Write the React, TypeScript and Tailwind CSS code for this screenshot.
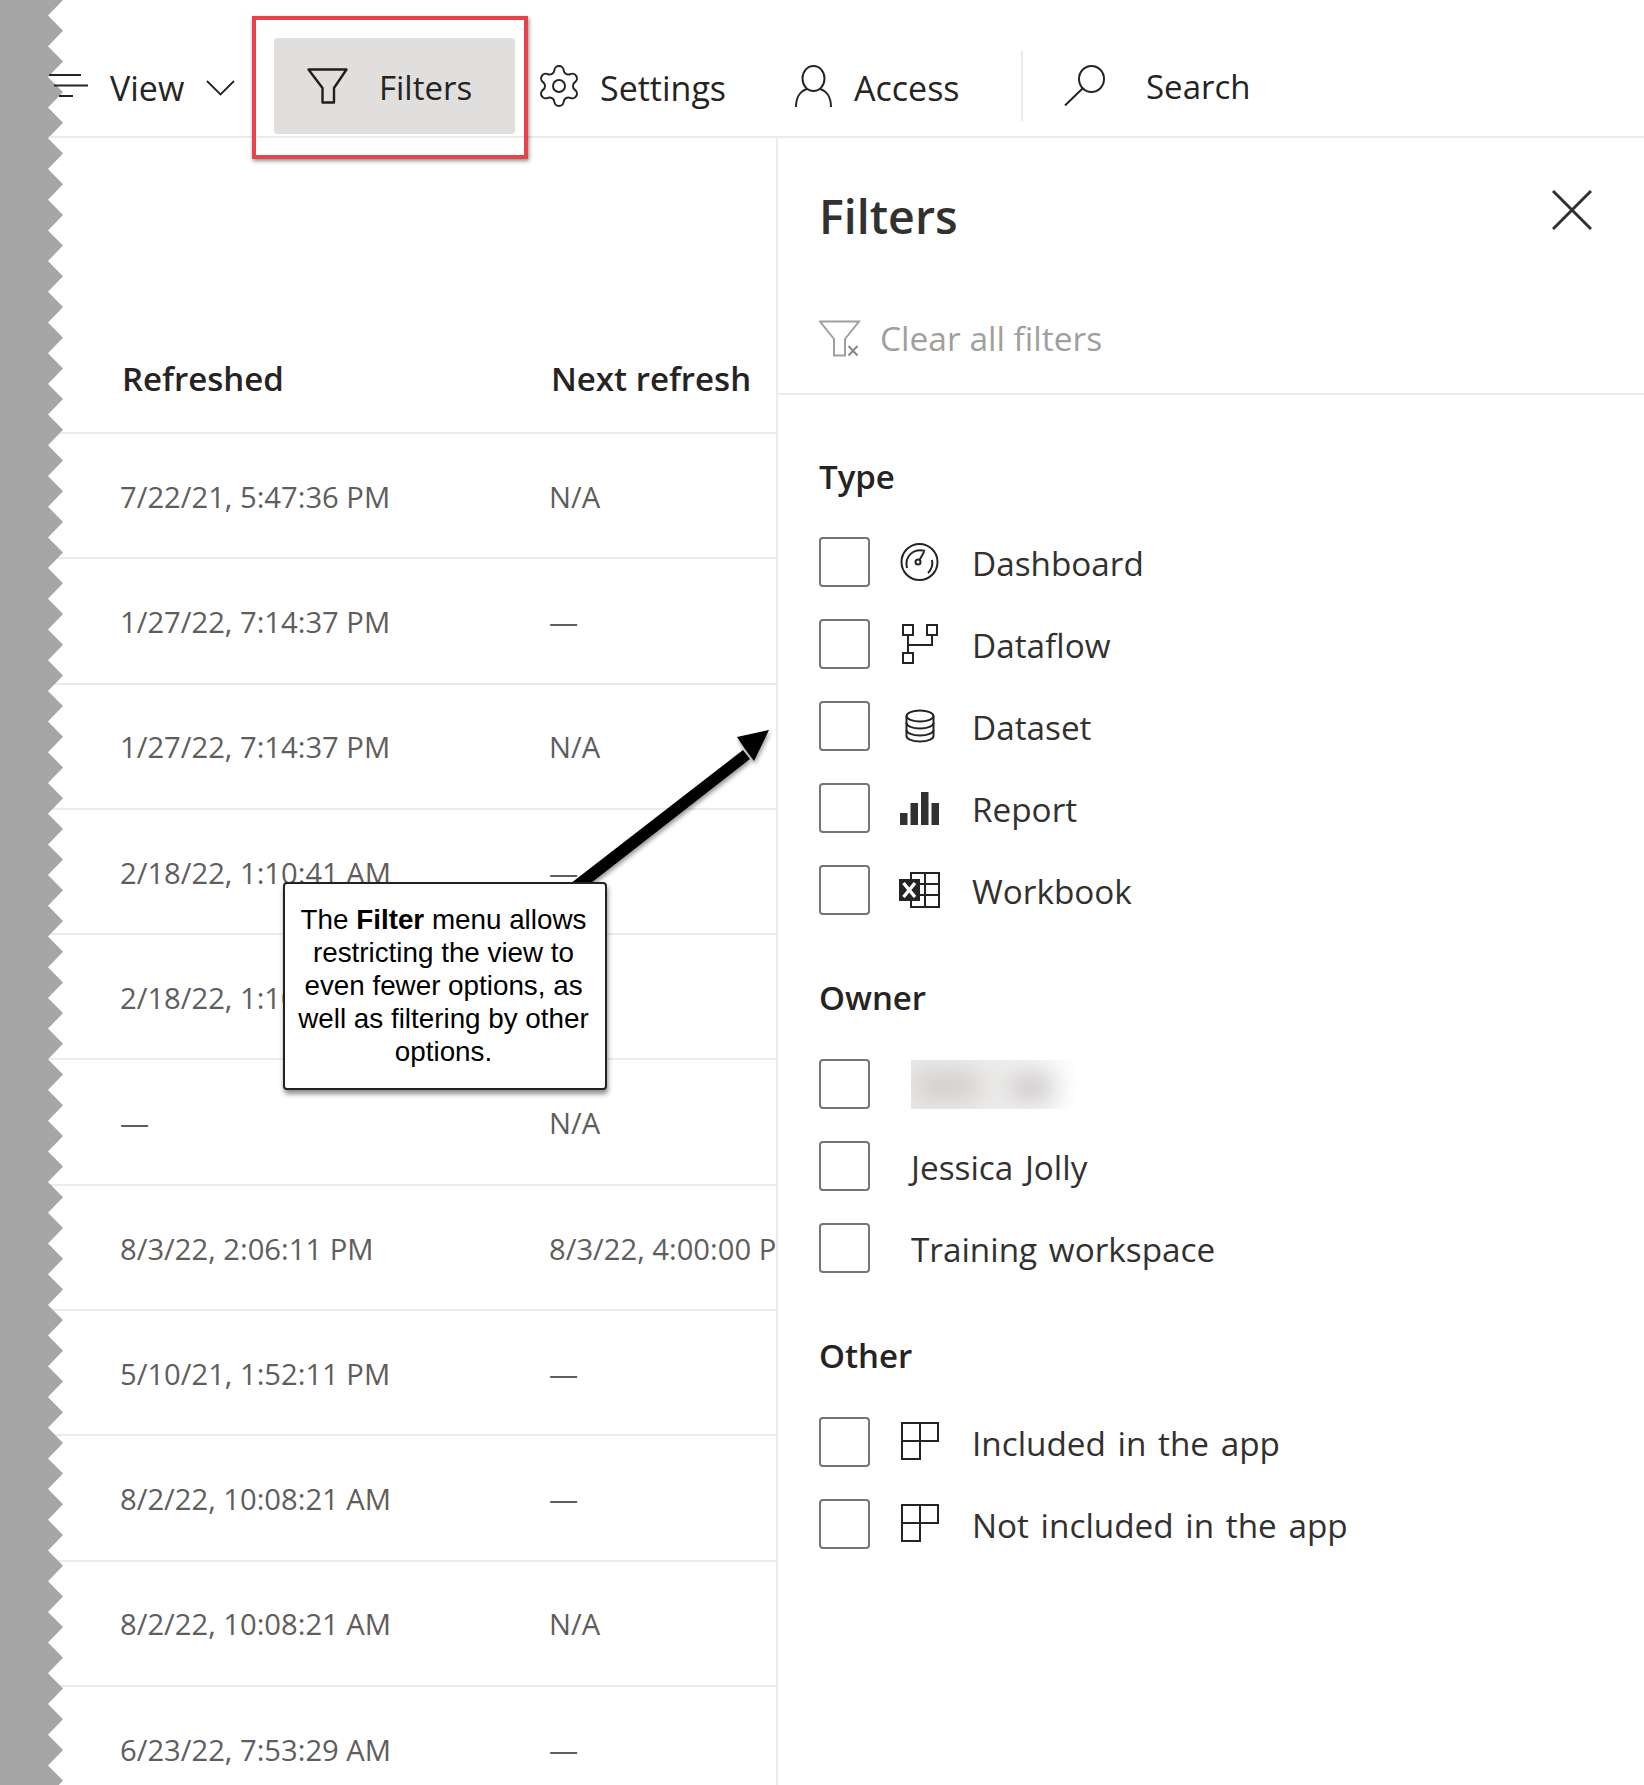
import { Settings } from "lucide-react";
import type { ReactNode } from "react";

const uiFont = { fontFamily: '"Open Sans", "Noto Sans", sans-serif' };

const rows = [
  ["7/22/21, 5:47:36 PM", "N/A"],
  ["1/27/22, 7:14:37 PM", "—"],
  ["1/27/22, 7:14:37 PM", "N/A"],
  ["2/18/22, 1:10:41 AM", "—"],
  ["2/18/22, 1:10:41 AM", "—"],
  ["—", "N/A"],
  ["8/3/22, 2:06:11 PM", "8/3/22, 4:00:00 PM"],
  ["5/10/21, 1:52:11 PM", "—"],
  ["8/2/22, 10:08:21 AM", "—"],
  ["8/2/22, 10:08:21 AM", "N/A"],
  ["6/23/22, 7:53:29 AM", "—"],
];

// torn paper edge on the left of the screenshot
const tornEdge = (() => {
  const pts = ["0,0", "63,0"];
  for (let y = 0; y < 1800; y += 30.7) {
    pts.push(`48,${(y + 15.5).toFixed(1)}`, `63,${(y + 30.7).toFixed(1)}`);
  }
  pts.push("0,1800");
  return pts.join(" ");
})();

function HamburgerIcon() {
  return (
    <svg width="39" height="23" viewBox="0 0 39 23" fill="none" stroke="#252423" strokeWidth="2" className="shrink-0">
      <path d="M0 1H32M5 11.5H39M10 22H24" />
    </svg>
  );
}

function ChevronIcon() {
  return (
    <svg width="29" height="16" viewBox="0 0 29 16" fill="none" stroke="#252423" strokeWidth="1.8" className="mt-[4px] shrink-0">
      <path d="M1 1L14.5 14.5L28 1" />
    </svg>
  );
}

function FilterIcon() {
  return (
    <svg width="41" height="36" viewBox="0 0 41 36" fill="none" stroke="#201f1e" strokeWidth="2.4" className="shrink-0">
      <path d="M1.5 1.5H39.5L27 20V34.5H15.5V20Z" strokeLinejoin="round" />
    </svg>
  );
}

function ClearFilterIcon() {
  return (
    <svg width="42" height="37" viewBox="0 0 42 37" fill="none" stroke="#a19f9d" strokeWidth="2" className="shrink-0">
      <path d="M1 1.5H40L26 19V35.5H15V19Z" />
      <path d="M29.5 26L38.5 35.5M38.5 26L29.5 35.5" stroke="#8a8886" fill="#fff" />
    </svg>
  );
}

function PersonIcon() {
  return (
    <svg width="37" height="42" viewBox="0 0 37 42" fill="none" stroke="#252423" strokeWidth="2" className="shrink-0">
      <ellipse cx="18.5" cy="13.5" rx="11" ry="12.5" />
      <path d="M1 42C1 33 5 26 12 24M36 42C36 33 32 26 25 24" />
    </svg>
  );
}

function SearchIcon() {
  return (
    <svg width="41" height="41" viewBox="0 0 41 41" fill="none" stroke="#252423" strokeWidth="2" className="shrink-0">
      <ellipse cx="27.5" cy="14" rx="12.5" ry="13" />
      <path d="M18.5 23.5L1 40.5" />
    </svg>
  );
}

function CloseIcon() {
  return (
    <svg width="40" height="40" viewBox="0 0 40 40" fill="none" stroke="#323130" strokeWidth="3" className="shrink-0">
      <path d="M1 1L39 39M39 1L1 39" />
    </svg>
  );
}

function DashboardIcon() {
  return (
    <svg width="39" height="38" viewBox="0 0 39 38" fill="none" stroke="#252423" strokeWidth="2" className="shrink-0">
      <circle cx="19.5" cy="19" r="18" />
      <path d="M7 25C4 13 14 5 25 8" />
      <path d="M32 17C33 22 32 26 28 30" />
      <circle cx="18" cy="19" r="2.5" />
      <path d="M19.5 17L24 9" />
    </svg>
  );
}

function DataflowIcon() {
  return (
    <svg width="36" height="40" viewBox="0 0 36 40" fill="none" stroke="#252423" strokeWidth="2" className="shrink-0">
      <rect x="1" y="1" width="10" height="10" />
      <rect x="25" y="1" width="10" height="10" />
      <rect x="1" y="29" width="10" height="10" />
      <path d="M6 11V29M6 21H30V11" />
    </svg>
  );
}

function DatasetIcon() {
  return (
    <svg width="30" height="34" viewBox="0 0 30 34" fill="none" stroke="#252423" strokeWidth="2" className="shrink-0">
      <ellipse cx="15" cy="7" rx="13.5" ry="5.5" />
      <path d="M1.5 7V27C1.5 30 7.5 32.5 15 32.5S28.5 30 28.5 27V7" />
      <path d="M1.5 14C1.5 17 7.5 19.5 15 19.5S28.5 17 28.5 14" />
      <path d="M1.5 21C1.5 24 7.5 26.5 15 26.5S28.5 24 28.5 21" />
    </svg>
  );
}

function ReportIcon() {
  return (
    <svg width="39" height="33" viewBox="0 0 39 33" fill="#323130" className="shrink-0">
      <rect x="0" y="21" width="7.5" height="12" />
      <rect x="10.5" y="11" width="7.5" height="22" />
      <rect x="21" y="0" width="7.5" height="33" />
      <rect x="31.5" y="11" width="7.5" height="22" />
    </svg>
  );
}

function WorkbookIcon() {
  return (
    <svg width="41" height="36" viewBox="0 0 41 36" fill="none" className="shrink-0">
      <path d="M12 1H40V35H12ZM26 1V35M21 12H40M21 23H40" stroke="#252423" strokeWidth="2" />
      <rect x="0" y="7" width="21" height="22" fill="#252423" />
      <path d="M4.5 11L16 25M16 11L4.5 25" stroke="#fff" strokeWidth="3.4" />
    </svg>
  );
}

function AppIcon() {
  return (
    <svg width="38" height="38" viewBox="0 0 38 38" fill="none" stroke="#252423" strokeWidth="2" className="-mt-[3px] shrink-0">
      <path d="M1 1H37V19H19V37H1ZM19 1V19M1 19H19" />
    </svg>
  );
}

function Checkbox() {
  return <div className="h-[50px] w-[51px] shrink-0 rounded-[4px] border-2 border-[#767676] bg-white" />;
}

function FilterRow({ icon, label }: { icon?: ReactNode; label: ReactNode }) {
  return (
    <div className="flex h-[50px] items-center">
      <Checkbox />
      {icon ? (
        <>
          <div className="ml-[29px] flex w-[41px] shrink-0 justify-center">{icon}</div>
          <span className="ml-[32px] whitespace-nowrap pt-[2px] text-[33.3px] leading-[40px] text-[#323130] [word-spacing:3px]">{label}</span>
        </>
      ) : (
        <span className="ml-[41px] whitespace-nowrap pt-[2px] text-[33.3px] leading-[40px] text-[#323130] [word-spacing:3px]">{label}</span>
      )}
    </div>
  );
}

function BlurredName() {
  return (
    <div className="relative -mt-[2px] h-[49px] w-[166px] overflow-hidden bg-gradient-to-r from-[#e9e8e7] via-[#eeedec] to-white">
      <div className="absolute left-[4px] top-[12px] h-[28px] w-[66px] rounded-full bg-[#cfcdcc] blur-md" />
      <div className="absolute left-[96px] top-[12px] h-[30px] w-[48px] rounded-full bg-[#cdcbca] blur-md" />
    </div>
  );
}

export default function App() {
  return (
    <div className="relative h-[1785px] w-[1644px] overflow-hidden bg-white" style={uiFont}>
      <svg width="64" height="1785" viewBox="0 0 64 1785" className="absolute left-0 top-0">
        <polygon points={tornEdge} fill="#a6a6a6" />
      </svg>

      <header className="relative ml-[49px] flex h-[138px] items-center border-b-2 border-[#edebe9] pt-[35px] text-[34px] leading-[40px] text-[#252423]">
        <HamburgerIcon />
        <span className="ml-[22px] w-[96px] shrink-0 pt-[5px]">View</span>
        <ChevronIcon />
        <div className="ml-[39px] flex h-[96px] w-[241px] shrink-0 items-center rounded-[4px] bg-[#e1dfdd] pl-[33px]">
          <FilterIcon />
          <span className="ml-[31px] pt-[5px] text-[33px]">Filters</span>
        </div>
        <Settings size={48} strokeWidth={1} className="ml-[20px] shrink-0" />
        <span className="ml-[17px] w-[129px] shrink-0 pt-[5px]">Settings</span>
        <div className="ml-[66px]">
          <PersonIcon />
        </div>
        <span className="ml-[22px] w-[105px] shrink-0 pt-[5px]">Access</span>
        <div className="ml-[62px] h-[70px] w-[2px] shrink-0 bg-[#edebe9]" />
        <div className="ml-[41px]">
          <SearchIcon />
        </div>
        <span className="ml-[41px] pt-[3px] text-[33px]">Search</span>
      </header>

      <div className="flex">
        <main className="w-[776px] shrink-0 overflow-hidden">
          <div className="flex h-[296px] items-end border-b-2 border-[#edebe9] pb-[33px] pl-[122px] text-[33px] font-semibold leading-[40px] text-[#252423]">
            <span className="w-[429px] shrink-0">Refreshed</span>
            <span className="whitespace-nowrap">Next refresh</span>
          </div>
          {rows.map(([refreshed, next], i) => (
            <div key={i} className="flex h-[125.3px] items-center whitespace-nowrap border-b-2 border-[#edebe9] pl-[120px] pt-[4px] text-[29.2px] text-[#605e5c]">
              <span className="w-[429px] shrink-0">{refreshed}</span>
              <span>{next}</span>
            </div>
          ))}
        </main>

        <aside className="min-h-[1647px] flex-1 border-l-2 border-[#edebe9]">
          <div className="h-[257px] border-b-2 border-[#edebe9] pl-[41px] pt-[46px]">
            <div className="flex h-[64px] items-start justify-between pr-[52px]">
              <h2 className="text-[46.5px] font-semibold leading-[64px] text-[#323130]">Filters</h2>
              <div className="pt-[6px]">
                <CloseIcon />
              </div>
            </div>
            <div className="mt-[70px] flex h-[40px] items-center">
              <ClearFilterIcon />
              <span className="ml-[19px] text-[33.5px] leading-[40px] text-[#a19f9d]">Clear all filters</span>
            </div>
          </div>

          <div className="pl-[41px]">
            <h3 className="mb-[40px] mt-[62px] text-[33px] font-semibold leading-[40px] text-[#252423]">Type</h3>
            <div className="flex flex-col gap-[32px]">
              <FilterRow icon={<DashboardIcon />} label="Dashboard" />
              <FilterRow icon={<DataflowIcon />} label="Dataflow" />
              <FilterRow icon={<DatasetIcon />} label="Dataset" />
              <FilterRow icon={<ReportIcon />} label="Report" />
              <FilterRow icon={<WorkbookIcon />} label="Workbook" />
            </div>

            <h3 className="mb-[41px] mt-[63px] text-[33px] font-semibold leading-[40px] text-[#252423]">Owner</h3>
            <div className="flex flex-col gap-[32px]">
              <FilterRow label={<BlurredName />} />
              <FilterRow label="Jessica Jolly" />
              <FilterRow label="Training workspace" />
            </div>

            <h3 className="mb-[41px] mt-[63px] text-[33px] font-semibold leading-[40px] text-[#252423]">Other</h3>
            <div className="flex flex-col gap-[32px]">
              <FilterRow icon={<AppIcon />} label="Included in the app" />
              <FilterRow icon={<AppIcon />} label="Not included in the app" />
            </div>
          </div>
        </aside>
      </div>

      {/* annotations on top of the screenshot */}
      <div className="absolute left-[252px] top-[16px] h-[143px] w-[276px] border-[4px] border-[#e8434a] shadow-[1px_2px_4px_rgba(0,0,0,0.45)]" />

      <svg width="220" height="170" viewBox="0 0 220 170" className="absolute left-[560px] top-[725px]" fill="#000">
        <g style={{ filter: "drop-shadow(1px 3px 2px rgba(0,0,0,0.4))" }}>
          <path d="M6 162L183 25L190 34L22 165Z" />
          <path d="M209 5L177 12L185 24L194 36Z" />
        </g>
      </svg>

      <div
        className="absolute left-[283px] top-[882px] flex h-[208px] w-[324px] items-center justify-center rounded-[4px] border-2 border-[#222] bg-white pb-[2px] pr-[3px] text-center text-[27.8px] leading-[33px] text-black shadow-[1px_4px_5px_rgba(0,0,0,0.45)]"
        style={{ fontFamily: '"Liberation Sans", Arial, sans-serif' }}
      >
        <p>
          The <b>Filter</b> menu allows
          <br />
          restricting the view to
          <br />
          even fewer options, as
          <br />
          well as filtering by other
          <br />
          options.
        </p>
      </div>
    </div>
  );
}
